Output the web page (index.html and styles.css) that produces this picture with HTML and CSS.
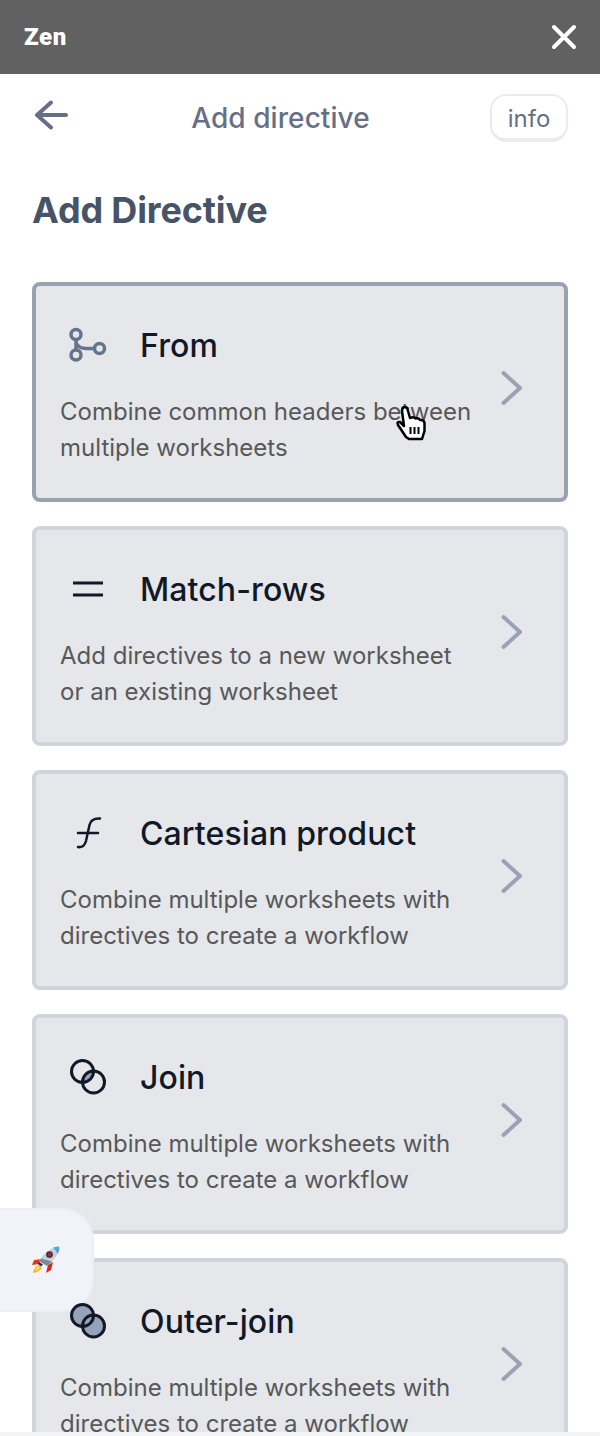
FILE: index.html

```html
<!DOCTYPE html>
<html lang="en">
<head>
  <meta charset="UTF-8" />
  <meta name="viewport" content="width=device-width, initial-scale=1.0"/>
  <title>Add directive</title>
  <link rel="stylesheet" href="styles.css">
</head>
<body>
  <header class="topbar">
    <span class="brand">Zen</span>
    <svg class="close" width="28" height="28" viewBox="0 0 28 28"><path d="M4 4L24 24M24 4L4 24"/></svg>
  </header>

  <main class="panel">
    <div class="nav">
      <svg class="back" width="34" height="30" viewBox="0 0 34 30"><path d="M32 15H3M17 2.500L3 15L17 27.500"/></svg>
      <span class="nav-title">Add directive</span>
      <button class="info">info</button>
    </div>

    <h1>Add Directive</h1>

    <div class="cards">
      <a class="card active">
        <div class="card-body">
          <div class="card-head">
            <svg class="icon" width="40" height="40" viewBox="0 0 40 40" fill="none" stroke="#64748b" stroke-width="3.500">
              <circle cx="8" cy="9.500" r="5"/><circle cx="8" cy="30" r="5"/><circle cx="31.500" cy="23.500" r="5"/>
              <path d="M8 14.500V25M8 18Q11 23.500 18 23.500H26.500"/>
            </svg>
            <span class="card-title">From</span>
          </div>
          <p>Combine common headers between multiple worksheets</p>
        </div>
        <svg class="chevron" width="24" height="36" viewBox="0 0 24 36"><path d="M3.500 3L20 18L3.500 33"/></svg>
      </a>

      <a class="card">
        <div class="card-body">
          <div class="card-head">
            <svg class="icon" width="40" height="40" viewBox="0 0 40 40" fill="none" stroke="#111827" stroke-width="3">
              <path d="M5 14H35M5 26H35"/>
            </svg>
            <span class="card-title">Match-rows</span>
          </div>
          <p>Add directives to a new worksheet<br>or an existing worksheet</p>
        </div>
        <svg class="chevron" width="24" height="36" viewBox="0 0 24 36"><path d="M3.500 3L20 18L3.500 33"/></svg>
      </a>

      <a class="card">
        <div class="card-body">
          <div class="card-head">
            <svg class="icon" width="40" height="40" viewBox="0 0 40 40" fill="none" stroke="#111827" stroke-width="2.500" stroke-linecap="round">
              <path d="M10 34Q16 35 18 28L21.500 12Q23 5 32 5.500M10 20H30"/>
            </svg>
            <span class="card-title">Cartesian product</span>
          </div>
          <p>Combine multiple worksheets with directives to create a workflow</p>
        </div>
        <svg class="chevron" width="24" height="36" viewBox="0 0 24 36"><path d="M3.500 3L20 18L3.500 33"/></svg>
      </a>

      <a class="card">
        <div class="card-body">
          <div class="card-head">
            <svg class="icon" width="40" height="40" viewBox="0 0 40 40" fill="none" stroke="#111827" stroke-width="3">
              <path d="M25.500 14A11 11 0 0 1 14.500 25.500A11 11 0 0 1 25.500 14Z" fill="#94a3b8" stroke="none"/>
              <circle cx="14.500" cy="14.500" r="11"/><circle cx="25.500" cy="25" r="11"/>
            </svg>
            <span class="card-title">Join</span>
          </div>
          <p>Combine multiple worksheets with directives to create a workflow</p>
        </div>
        <svg class="chevron" width="24" height="36" viewBox="0 0 24 36"><path d="M3.500 3L20 18L3.500 33"/></svg>
      </a>

      <a class="card">
        <div class="card-body">
          <div class="card-head">
            <svg class="icon" width="40" height="40" viewBox="0 0 40 40" fill="none" stroke="#111827" stroke-width="3">
              <circle cx="14.500" cy="14.500" r="11" fill="#94a3b8" stroke="none"/><circle cx="25.500" cy="25" r="11" fill="#94a3b8" stroke="none"/>
              <circle cx="14.500" cy="14.500" r="11"/><circle cx="25.500" cy="25" r="11"/>
            </svg>
            <span class="card-title">Outer-join</span>
          </div>
          <p>Combine multiple worksheets with directives to create a workflow</p>
        </div>
        <svg class="chevron" width="24" height="36" viewBox="0 0 24 36"><path d="M3.500 3L20 18L3.500 33"/></svg>
      </a>
    </div>
  </main>

  <div class="launcher">
    <svg width="30" height="28" viewBox="0 0 30 28">
      <path d="M11 13L3 14L1 19L8 18Z" fill="#e8341c"/>
      <path d="M17 19L15 27L20 24L22 16Z" fill="#d5281a"/>
      <path d="M8 19Q3 21 2 27Q8 26 11 22Z" fill="#f7b21c"/>
      <path d="M7 20Q5 22 4 25Q7 24 9 22Z" fill="#fde68a"/>
      <path d="M8 15Q15 3 28 0.500Q29 9 16 20Z" fill="#c5d0db"/>
      <path d="M16 20L8 15L10 12.500L21 15.500Z" fill="#7d8a9a"/>
      <path d="M22 1.500Q26 0.500 28 0.500Q29 4 26.500 8Q25 3.500 22 1.500Z" fill="#4ca3dd"/>
      <circle cx="18.500" cy="8.500" r="2.700" fill="#c21f1f" stroke="#2b3440" stroke-width="1.300"/>
      <path d="M8 16L12 18.500L10 20.500L7 18Z" fill="#2b3440"/>
    </svg>
  </div>

  <svg class="pointer" width="32" height="36" viewBox="0 0 32 36">
    <path d="M11 32L3 20Q1.500 16.500 5 17L9 21L7 6Q7 2 10 2Q12.500 2 13 6L15 13Q19 11.500 20.500 13.500Q24 12.500 25 15Q29 14.500 29.500 18V26L27 34H14Z" fill="#fff" stroke="#000" stroke-width="2.500" stroke-linejoin="round"/>
    <path d="M15.500 22V29M19.500 22V29M23.500 22V29" stroke="#000" stroke-width="2"/>
  </svg>

  <div class="bottom-strip"></div>
</body>
</html>
```

FILE: styles.css

```css
* { box-sizing: border-box; }
html, body { height: 1436px; overflow: hidden; }
body {
  margin: 0;
  background: white;
  font-family: Inter, "Noto Sans", sans-serif;
  color: #111827;
  position: relative;
}
.topbar {
  height: 74px;
  background: #616161;
  padding: 0 22px 0 24px;
  display: flex;
  align-items: center;
  justify-content: space-between;
}
.brand {
  color: white;
  font-family: Roboto, sans-serif;
  font-size: 24px;
  font-weight: 900;
  letter-spacing: 0.6px;
}
.close path {
  fill: none;
  stroke: white;
  stroke-width: 4;
  stroke-linecap: round;
}
.panel { padding: 20px 32px 0; }
.nav {
  display: flex;
  align-items: center;
  justify-content: space-between;
  height: 48px;
}
.back { margin: -6px 0 0 2px; }
.back path {
  fill: none;
  stroke: #667085;
  stroke-width: 4;
  stroke-linecap: round;
  stroke-linejoin: round;
}
.nav-title {
  font-size: 28px;
  font-weight: 500;
  letter-spacing: 0.07px;
  color: #667085;
  margin-left: 3px;
}
.info {
  width: 78px;
  height: 48px;
  background: white;
  border: 2px solid #e9ebf0;
  border-bottom-width: 4px;
  border-radius: 16px;
  font: 400 24px Inter, sans-serif;
  color: #667085;
  padding: 2px 0 0;
}
h1 {
  margin: 46px 0 50px;
  font-size: 36px;
  line-height: 44px;
  font-weight: 700;
  letter-spacing: -0.15px;
  color: #475467;
}
.cards {
  display: flex;
  flex-direction: column;
  gap: 24px;
}
.card {
  flex: none;
  height: 220px;
  background: #e5e7eb;
  border: 4px solid #d0d5dd;
  border-radius: 8px;
  padding: 39px 40px 0 24px;
  display: flex;
  align-items: flex-start;
  justify-content: space-between;
}
.card.active { border-color: #98a2b3; }
.card-body { width: 416px; }
.card-head {
  display: flex;
  align-items: center;
  height: 40px;
  margin-bottom: 29px;
}
.icon {
  margin: 0 32px 0 8px;
  flex: none;
  position: relative;
  z-index: 1;
}
.card-title {
  font-size: 32px;
  font-weight: 500;
  letter-spacing: 0.1px;
}
.card p {
  margin: 0;
  font-size: 24px;
  line-height: 36px;
  color: #585858;
}
.chevron { margin-top: 45px; flex: none; }
.chevron path {
  fill: none;
  stroke: #98a2b3;
  stroke-width: 4;
  stroke-linecap: round;
  stroke-linejoin: round;
}
.launcher {
  position: absolute;
  left: 0;
  top: 1208px;
  width: 94px;
  height: 104px;
  background: #f1f3f8;
  border: 2px solid #eceef3;
  border-left: none;
  border-radius: 0 32px 32px 0;
  display: flex;
  align-items: center;
  padding-left: 31px;
}
.pointer {
  position: absolute;
  left: 395px;
  top: 405px;
}
.bottom-strip {
  position: absolute;
  left: 0;
  right: 0;
  bottom: 0;
  height: 4px;
  background: #f3f4f6;
}
```
